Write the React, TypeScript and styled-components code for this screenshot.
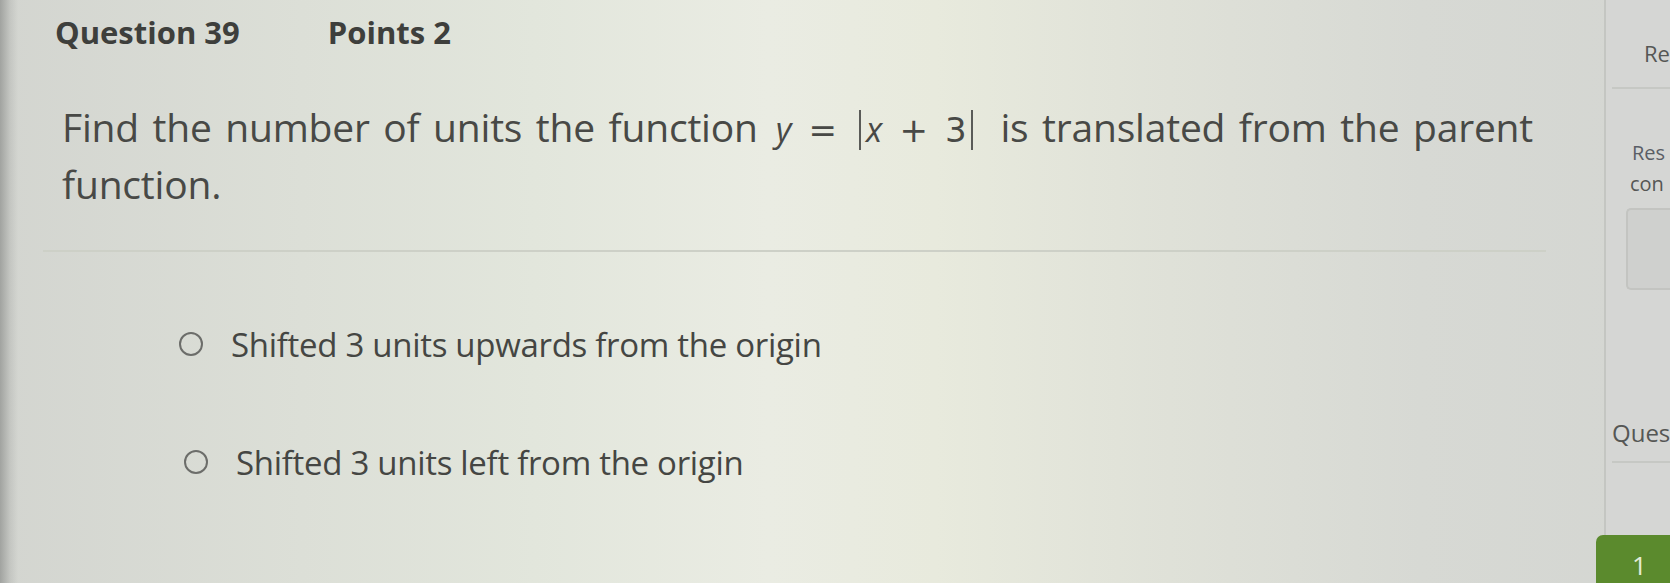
import React from 'react';
import styled, { createGlobalStyle } from 'styled-components';

const GlobalStyle = createGlobalStyle`
  html, body {
    margin: 0;
    padding: 0;
  }
  body {
    font-family: 'Open Sans', 'Noto Sans', sans-serif;
    color: #4a4b48;
  }
`;

const Page = styled.div`
  width: 1670px;
  height: 583px;
  overflow: hidden;
  display: flex;
  background:
    linear-gradient(90deg, rgba(120, 122, 120, 0.55) 0px, rgba(150, 152, 150, 0.25) 10px, rgba(0, 0, 0, 0) 18px),
    linear-gradient(90deg, #d3d5d0 0%, #dcdfd7 18%, #e2e6dc 32%, #eaece3 46%, #e8eadd 56%, #dfe1d8 70%, #d7d9d4 85%, #d4d6d2 100%);
`;

const Main = styled.main`
  flex: 1;
  display: flex;
  flex-direction: column;
  padding: 12px 58px 0 43px;
`;

const Header = styled.div`
  display: flex;
  gap: 88px;
  padding-left: 12px;
  font-size: 31px;
  line-height: 40px;
  font-weight: 700;
  color: #3e3f3c;
`;

const Prompt = styled.p`
  margin: 48px 13px 0 19px;
  font-size: 39px;
  line-height: 53px;
  text-align: justify;
  letter-spacing: -0.2px;
  color: #484946;
`;

const Divider = styled.hr`
  margin: 40px 0 0 0;
  border: none;
  height: 2px;
  background: #cdd0c7;
`;

const Math = styled.span`
  font-family: 'DejaVu Sans', 'Open Sans', sans-serif;
  font-size: 34px;
  word-spacing: 3px;
  margin: 0 22px 0 18px;
`;

const Var = styled.i`
  font-style: italic;
  font-family: 'Open Sans', sans-serif;
`;

const Bar = styled.span`
  display: inline-block;
  width: 2px;
  height: 40px;
  margin: 0 5px;
  background: #5a5b58;
  vertical-align: -8px;
`;

const Options = styled.div`
  display: flex;
  flex-direction: column;
  gap: 68px;
  margin-top: 67px;
  padding-left: 136px;
`;

const Option = styled.label<{ shift: number }>`
  display: flex;
  align-items: center;
  gap: 28px;
  height: 50px;
  margin-left: ${(p) => p.shift}px;
  font-size: 33px;
  color: #454643;
  letter-spacing: -0.3px;
`;

const Radio = styled.span`
  width: 20px;
  height: 20px;
  border: 2px solid #6c6d6a;
  border-radius: 50%;
  flex: none;
`;

const Sidebar = styled.aside`
  width: 64px;
  flex: none;
  display: flex;
  flex-direction: column;
  border-left: 2px solid #c4c6c2;
  background: #d5d6d4;
  color: #585a58;
`;

const SideText = styled.div<{ indent: number; size?: number; tint?: string }>`
  margin-left: ${(p) => p.indent}px;
  font-size: ${(p) => p.size ?? 22}px;
  line-height: 32px;
  white-space: nowrap;
  overflow: hidden;
  color: ${(p) => p.tint ?? '#555755'};
`;

const Section = styled.div<{ top: number; height: number; line?: boolean }>`
  padding-top: ${(p) => p.top}px;
  height: ${(p) => p.height}px;
  box-sizing: border-box;
  border-bottom: ${(p) => (p.line ? '2px solid #c6c8c4' : 'none')};
  margin-left: 6px;
  overflow: hidden;
`;

const InputBox = styled.div`
  margin: 8px 0 0 20px;
  height: 80px;
  border: 2px solid #c3c4c1;
  border-right: none;
  border-radius: 5px 0 0 5px;
  background: #cfd0ce;
`;

const PageTile = styled.div`
  margin: 72px 0 0 -10px;
  flex: 1;
  border-radius: 7px 0 0 0;
  background: #5b8a2d;
  color: #e4ecd8;
  font-size: 26px;
  padding: 12px 0 0 36px;
`;

export default function App() {
  return (
    <>
      <GlobalStyle />
      <Page>
        <Main>
          <Header>
            <span>Question 39</span>
            <span>Points 2</span>
          </Header>
          <Prompt>
            Find the number of units the function
            <Math>
              <Var>y</Var> = <Bar />
              <Var>x</Var> + 3<Bar />
            </Math>
            is translated from the parent function.
          </Prompt>
          <Divider />
          <Options>
            <Option shift={0}>
              <Radio />
              Shifted 3 units upwards from the origin
            </Option>
            <Option shift={5}>
              <Radio />
              Shifted 3 units left from the origin
            </Option>
          </Options>
        </Main>
        <Sidebar>
          <Section top={37} height={90} line>
            <SideText indent={32}>Re</SideText>
          </Section>
          <SideText indent={26} size={20} tint="#5a5e66" style={{ marginTop: 48 }}>
            Res
          </SideText>
          <SideText indent={24} size={20}>
            con
          </SideText>
          <InputBox />
          <Section top={127} height={174} line>
            <SideText indent={0} size={24}>
              Ques
            </SideText>
          </Section>
          <PageTile>1</PageTile>
        </Sidebar>
      </Page>
    </>
  );
}
